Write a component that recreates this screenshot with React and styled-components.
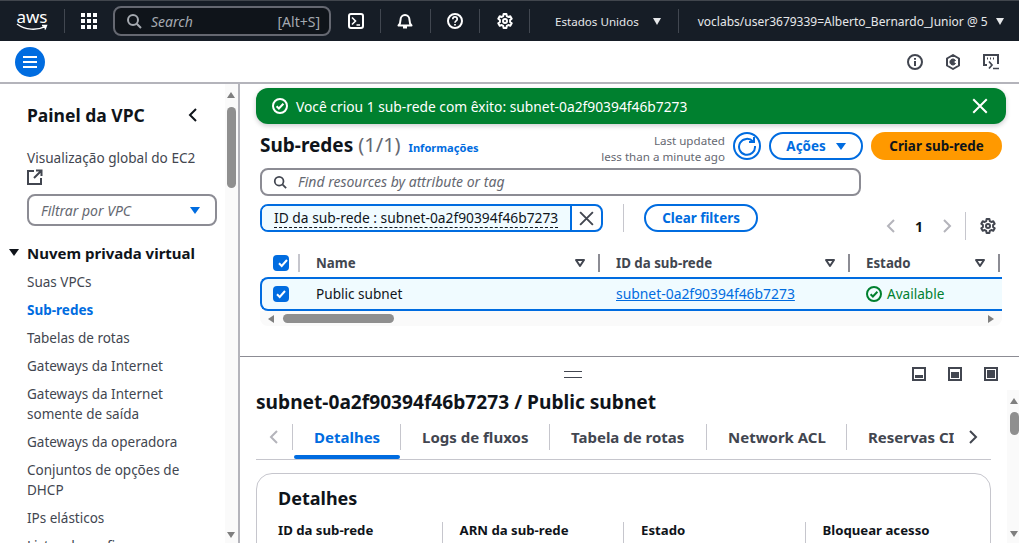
import styled, { createGlobalStyle } from "styled-components";

const GlobalStyle = createGlobalStyle`
  html, body { margin: 0; padding: 0; overflow: hidden; background: #fff; }
  body { font-family: "Noto Sans", "Open Sans", sans-serif; color: #0f141a; }
  * { box-sizing: border-box; }
`;

const Page = styled.div`
  width: 1019px;
  height: 543px;
  overflow: hidden;
  display: flex;
  flex-direction: column;
`;

/* top nav */
const TopBar = styled.header`
  height: 41px;
  flex: none;
  background: #161d26;
  border-top: 1px solid #41464d;
  color: #e6e8ea;
  display: flex;
  align-items: center;
  padding-left: 16px;
`;
const Logo = styled.div`
  width: 32px;
  height: 24px;
  position: relative;
  color: #fff;
  font-size: 17px;
  line-height: 15px;
  text-align: center;
  svg { position: absolute; left: 0; top: 14px; }
`;
const NavSep = styled.span`
  width: 1px;
  height: 24px;
  background: #414750;
  flex: none;
  margin: ${(p) => p.$m || "0"};
`;
const NavIcon = styled.span`
  width: 16px;
  height: 16px;
  flex: none;
  display: flex;
  margin: ${(p) => p.$m || "0"};
  color: #fff;
`;
const SearchBox = styled.div`
  width: 218px;
  height: 30px;
  flex: none;
  margin-left: 16px;
  border: 2px solid #656871;
  border-radius: 8px;
  background: #0f141a;
  display: flex;
  align-items: center;
  padding: 0 9px 0 11px;
  font-size: 14px;
  color: #a4a9b0;
  span:nth-child(2) { font-style: italic; margin-left: 9px; flex: 1; }
`;
const NavText = styled.span`
  font-size: ${(p) => p.$size || "11.6px"};
  white-space: nowrap;
  color: #e6e8ea;
  margin: ${(p) => p.$m || "0"};
`;
const NavCaret = styled.span`
  width: 0;
  height: 0;
  flex: none;
  border-left: 4.5px solid transparent;
  border-right: 4.5px solid transparent;
  border-top: 7px solid #e6e8ea;
  margin: ${(p) => p.$m || "0"};
`;

/* bar below nav */
const SubBar = styled.div`
  height: 43px;
  flex: none;
  border-bottom: 2px solid #b4b4bb;
  display: flex;
  align-items: center;
  padding: 1px 20px 0 15px;
`;
const MenuButton = styled.span`
  width: 30px;
  height: 30px;
  border-radius: 50%;
  background: #006ce0;
  display: flex;
  flex-direction: column;
  justify-content: center;
  gap: 3px;
  padding: 0 8px;
  margin-right: auto;
  i { display: block; height: 2px; background: #fff; }
`;
const ToolIcon = styled.span`
  width: 16px;
  height: 16px;
  margin-left: 22px;
  display: flex;
  color: #424650;
`;

const Body = styled.div`
  flex: 1;
  min-height: 0;
  display: flex;
`;

/* side nav */
const Side = styled.aside`
  width: 240px;
  flex: none;
  position: relative;
  border-right: 2px solid #b4b4bb;
  padding: 20px 0 0 27px;
  overflow: hidden;
`;
const SideHead = styled.div`
  display: flex;
  align-items: center;
  justify-content: space-between;
  width: 174px;
  height: 22px;
  font-size: 17.5px;
  font-weight: 700;
  color: #0f141a;
`;
const SideLink = styled.div`
  margin-top: 22px;
  width: 190px;
  font-size: 13.6px;
  line-height: 20px;
  color: #424650;
  svg { display: block; margin-top: 1px; }
`;
const VpcSelect = styled.div`
  width: 190px;
  height: 32px;
  margin-top: 9px;
  border: 2px solid #8c8c94;
  border-radius: 8px;
  display: flex;
  align-items: center;
  justify-content: space-between;
  padding: 0 15px 0 12px;
  font-size: 14px;
  font-style: italic;
  color: #656871;
`;
const BlueCaret = styled.span`
  width: 0;
  height: 0;
  border-left: 5.5px solid transparent;
  border-right: 5.5px solid transparent;
  border-top: 7.5px solid #006ce0;
`;
const SideSection = styled.div`
  position: relative;
  margin-top: 16px;
  font-size: 15px;
  line-height: 22px;
  font-weight: 700;
  color: #0f141a;
  &::before {
    content: "";
    position: absolute;
    left: -18px;
    top: 7px;
    border-left: 5px solid transparent;
    border-right: 5px solid transparent;
    border-top: 7px solid #0f141a;
  }
`;
const SideList = styled.ul`
  list-style: none;
  margin: 8px 0 0;
  padding: 0;
  width: 170px;
  display: flex;
  flex-direction: column;
  gap: 8px;
`;
const SideItem = styled.li`
  font-size: 13.5px;
  line-height: 20px;
  color: ${(p) => (p.$active ? "#006ce0" : "#424650")};
  font-weight: ${(p) => (p.$active ? 700 : 400)};
`;
const ScrollTrack = styled.div`
  position: absolute;
  right: 0;
  top: ${(p) => p.$top || "0"};
  bottom: 0;
  width: ${(p) => p.$w};
  background: #fafafa;
`;
const ThumbV = styled.div`
  position: absolute;
  left: ${(p) => p.$l};
  top: ${(p) => p.$t};
  width: 9px;
  height: ${(p) => p.$h};
  border-radius: 4.5px;
  background: #8f8f8f;
`;
const ArrowV = styled.div`
  position: absolute;
  left: ${(p) => p.$l};
  ${(p) => (p.$down ? `bottom: ${p.$o};` : `top: ${p.$o};`)}
  border-left: 4.5px solid transparent;
  border-right: 4.5px solid transparent;
  ${(p) => (p.$down ? "border-top: 6px solid #7f7f7f;" : "border-bottom: 6px solid #7f7f7f;")}
`;

/* main */
const Main = styled.main`
  flex: 1;
  min-width: 0;
  display: flex;
  flex-direction: column;
`;
const TopPane = styled.section`
  height: 273px;
  flex: none;
  border-bottom: 1px solid #8c8c94;
  padding: 4px 13px 0 16px;
`;
const Flash = styled.div`
  height: 36px;
  border-radius: 12px;
  background: #00802f;
  box-shadow: 0 2px 5px rgba(0, 7, 22, 0.2);
  color: #fff;
  display: flex;
  align-items: center;
  padding: 0 17px 0 16px;
  font-size: 13.8px;
  svg:first-child { margin-right: 8px; }
  span { flex: 1; }
`;
const HeaderRow = styled.div`
  display: flex;
  align-items: center;
  margin-top: 8px;
  height: 28px;
  padding: 0 4px;
`;
const PageTitle = styled.h1`
  margin: -2px 0 0;
  font-size: 19px;
  font-weight: 700;
  line-height: 26px;
  white-space: nowrap;
  span { font-size: 20px; font-weight: 400; color: #656871; margin-left: 5px; }
`;
const InfoLink = styled.a`
  font-size: 11.1px;
  font-weight: 700;
  color: #006ce0;
  margin-left: 8px;
  margin-top: 3px;
`;
const Updated = styled.div`
  margin-left: auto;
  text-align: right;
  font-size: 11.6px;
  line-height: 16px;
  color: #656871;
  margin-top: 5px;
`;
const RoundIcon = styled.span`
  width: 28px;
  height: 28px;
  border: 2px solid #006ce0;
  border-radius: 50%;
  display: flex;
  align-items: center;
  justify-content: center;
  margin: 0 8px;
  color: #006ce0;
`;
const OutlineButton = styled.span`
  height: 28px;
  width: ${(p) => p.$w};
  border: 2px solid #006ce0;
  border-radius: 14px;
  color: #006ce0;
  font-size: 13.4px;
  font-weight: 700;
  display: flex;
  align-items: center;
  justify-content: center;
  gap: 10px;
  flex: none;
`;
const PrimaryButton = styled.span`
  height: 28px;
  width: 131px;
  margin-left: 8px;
  border-radius: 14px;
  background: #ff9900;
  color: #0f141a;
  font-size: 13.4px;
  font-weight: 700;
  display: flex;
  align-items: center;
  justify-content: center;
  flex: none;
`;
const FindInput = styled.div`
  margin: 8px 0 0 4px;
  width: 601px;
  height: 28px;
  border: 2px solid #8c8c94;
  border-radius: 8px;
  display: flex;
  align-items: center;
  gap: 11px;
  padding: 0 0 1px 11px;
  font-size: 14px;
  font-style: italic;
  color: #656871;
  svg { color: #424650; }
`;
const FilterRow = styled.div`
  display: flex;
  align-items: flex-start;
  margin: 8px 0 0 4px;
  height: 36px;
`;
const Chip = styled.div`
  height: 28px;
  width: 343px;
  flex: none;
  border: 2px solid #006ce0;
  border-radius: 8px;
  display: flex;
  overflow: hidden;
  font-size: 13.8px;
  color: #0f141a;
`;
const ChipLabel = styled.div`
  flex: 1;
  background: #f0fbff;
  border-right: 2px solid #006ce0;
  padding-left: 12px;
  line-height: 23px;
  white-space: nowrap;
  span { border-bottom: 1px dashed #0f141a; }
`;
const ChipClose = styled.div`
  width: 29px;
  display: flex;
  align-items: center;
  justify-content: center;
  color: #424650;
`;
const FilterSep = styled.span`
  width: 1px;
  height: 28px;
  background: #c6c6cd;
  margin: 0 20px;
  flex: none;
`;
const Pager = styled.div`
  margin-left: auto;
  margin-top: 8px;
  display: flex;
  align-items: center;
  height: 28px;
  color: #b4b4bb;
  padding-right: 10px;
  b { width: 40px; text-align: center; font-size: 14px; color: #0f141a; }
  i { width: 1px; height: 28px; background: #c6c6cd; margin: 0 14px 0 10px; }
  svg:last-child { color: #424650; }
`;
const TableWrap = styled.div`
  margin: 9px 0 0 4px;
  width: 742px;
  overflow: hidden;
  position: relative;
`;
const TableGrid = styled.div`
  display: grid;
  grid-template-columns: 40px 300px 250px 150px 2px;
`;
const HeadCell = styled.div`
  height: 28px;
  display: flex;
  align-items: center;
  font-size: 13.3px;
  font-weight: 700;
  color: #424650;
  padding-left: ${(p) => (p.$check ? "13px" : "16px")};
  padding-right: 14px;
  position: relative;
  white-space: nowrap;
  &::after {
    content: "";
    position: absolute;
    right: 0;
    top: 5px;
    height: 18px;
    width: 2px;
    background: ${(p) => (p.$check ? "#c6c6cd" : "#8c8c94")};
  }
  svg:last-child { margin-left: auto; }
`;
const Check = styled.span`
  width: 16px;
  height: 16px;
  border-radius: 4px;
  background: #006ce0;
  display: flex;
  align-items: center;
  justify-content: center;
  flex: none;
`;
const Row = styled.div`
  grid-column: 1 / -1;
  height: 34px;
  padding-bottom: 1px;
  display: grid;
  grid-template-columns: inherit;
  align-items: center;
  background: #f0fbff;
  border: 2px solid #006ce0;
  border-right: 0;
  border-radius: 8px 0 0 8px;
  font-size: 13.6px;
`;
const RowCheck = styled.div`
  padding-left: 11px;
`;
const RowCell = styled.div`
  padding-left: 14px;
  white-space: nowrap;
  display: flex;
  align-items: center;
  gap: 5px;
  color: ${(p) => p.$color || "#0f141a"};
  a { color: #006ce0; text-decoration: underline; font-size: 13.9px; }
`;
const HScroll = styled.div`
  height: 15px;
  background: #fafafa;
  display: flex;
  align-items: center;
  padding: 0 8px;
  border-radius: 0 0 8px 8px;
`;
const HThumb = styled.div`
  width: 111px;
  height: 9px;
  border-radius: 5px;
  background: #8f8f8f;
  margin-left: 9px;
  margin-right: auto;
`;
const ArrowH = styled.span`
  width: 0;
  height: 0;
  border-top: 4.5px solid transparent;
  border-bottom: 4.5px solid transparent;
  ${(p) => (p.$right ? "border-left: 6px solid #7f7f7f;" : "border-right: 6px solid #7f7f7f;")}
`;

/* bottom split */
const BottomPane = styled.section`
  flex: 1;
  min-height: 0;
  position: relative;
  overflow: hidden;
  padding: 0 28px 0 16px;
`;
const Handle = styled.div`
  height: 33px;
  position: relative;
  &::before {
    content: "";
    position: absolute;
    left: 308px;
    top: 14px;
    width: 18px;
    height: 5px;
    border-top: 1px solid #424650;
    border-bottom: 1px solid #424650;
  }
`;
const SplitIcons = styled.div`
  position: absolute;
  right: 21px;
  top: 10px;
  display: flex;
  gap: 22px;
  color: #424650;
`;
const DetailTitle = styled.h2`
  margin: 0;
  font-size: 19.15px;
  line-height: 24px;
  font-weight: 700;
  white-space: nowrap;
`;
const Tabs = styled.div`
  margin-top: 10px;
  height: 36px;
  border-bottom: 1px solid #c6c6cd;
  display: flex;
  align-items: flex-start;
  position: relative;
`;
const TabArrow = styled.span`
  width: ${(p) => p.$w};
  height: 26px;
  display: flex;
  align-items: center;
  justify-content: center;
  color: ${(p) => p.$c};
  flex: none;
`;
const Tab = styled.div`
  height: 35px;
  flex: none;
  width: ${(p) => p.$w};
  padding: 1px 0 0 22px;
  font-size: 15px;
  line-height: 24px;
  font-weight: 700;
  overflow: hidden;
  white-space: nowrap;
  color: ${(p) => (p.$active ? "#006ce0" : "#424650")};
  position: relative;
  &::before {
    content: "";
    position: absolute;
    left: 0;
    top: 0;
    height: 26px;
    width: 1px;
    background: #c6c6cd;
  }
  ${(p) =>
    p.$active &&
    `&::after {
    content: "";
    position: absolute;
    left: 2px;
    right: 0;
    bottom: 0;
    height: 4px;
    border-radius: 2px;
    background: #006ce0;
  }`}
`;
const Card = styled.div`
  margin-top: 13px;
  height: 120px;
  border: 1px solid #c6c6cd;
  border-radius: 16px;
  padding: 12px 21px 0;
`;
const CardTitle = styled.h3`
  margin: 0;
  font-size: 18px;
  line-height: 24px;
  font-weight: 700;
`;
const DetailGrid = styled.div`
  margin-top: 10px;
  display: grid;
  grid-template-columns: repeat(4, 181.5px);
`;
const DetailCol = styled.div`
  height: 60px;
  font-size: 13.2px;
  line-height: 20px;
  font-weight: 700;
  color: #0f141a;
  position: relative;
  white-space: nowrap;
  ${(p) =>
    !p.$last &&
    `&::after {
    content: "";
    position: absolute;
    right: 17px;
    top: 2px;
    bottom: 0;
    width: 1px;
    background: #c6c6cd;
  }`}
`;
const Marker = styled.span`
  display: block;
  margin: 5px 0 0 3px;
  width: 13px;
  height: 13px;
  border-radius: ${(p) => (p.$round ? "50%" : "1px")};
  background: ${(p) => p.$c};
`;

const Svg = ({ size = 16, children, ...rest }) => (
  <svg width={size} height={size} viewBox="0 0 16 16" fill="none" stroke="currentColor" strokeWidth="2" {...rest}>
    {children}
  </svg>
);
const SearchIcon = ({ size = 16 }) => (
  <Svg size={size}>
    <circle cx="7" cy="7" r="5" />
    <path d="M10.7 10.7L15 15" />
  </Svg>
);
const CloseIcon = ({ size = 16 }) => (
  <Svg size={size} strokeWidth="1.8">
    <path d="M2 2l12 12M14 2L2 14" />
  </Svg>
);
const GearIcon = ({ size = 16 }) => (
  <Svg size={size}>
    <circle cx="8" cy="8" r="2" />
    <path d="M6.6 1h2.8l.4 2.1 1.5.9 2-.7 1.4 2.4-1.6 1.4v1.8l1.6 1.4-1.4 2.4-2-.7-1.5.9-.4 2.1H6.6l-.4-2.1-1.5-.9-2 .7-1.4-2.4 1.6-1.4V7.1L1.3 5.7l1.4-2.4 2 .7 1.5-.9z" strokeLinejoin="round" />
  </Svg>
);
const CheckCircle = ({ size = 16 }) => (
  <Svg size={size}>
    <circle cx="8" cy="8" r="7" />
    <path d="M4.6 8.2l2.3 2.3 4.5-4.7" />
  </Svg>
);
const ChevL = () => (
  <Svg>
    <path d="M11 2L5 8l6 6" />
  </Svg>
);
const ChevR = () => (
  <Svg>
    <path d="M5 2l6 6-6 6" />
  </Svg>
);
const Tick = () => (
  <svg width="12" height="12" viewBox="0 0 12 12" fill="none" stroke="#fff" strokeWidth="2">
    <path d="M2 6.3l2.7 2.7L10 3" />
  </svg>
);
const SortCaret = () => (
  <svg width="12" height="10" viewBox="0 0 12 10" fill="none" stroke="#424650" strokeWidth="2" strokeLinejoin="round">
    <path d="M2 2h8L6 8z" />
  </svg>
);
const PanelIcon = ({ y, h }) => (
  <svg width="14" height="14" viewBox="0 0 14 14">
    <rect x="1" y="1" width="12" height="12" fill="none" stroke="currentColor" strokeWidth="2" />
    <rect x="3" y={y} width="8" height={h} fill="currentColor" />
  </svg>
);

const sideLinks = [
  "Suas VPCs",
  "Sub-redes",
  "Tabelas de rotas",
  "Gateways da Internet",
  "Gateways da Internet somente de saída",
  "Gateways da operadora",
  "Conjuntos de opções de DHCP",
  "IPs elásticos",
  "Listas de prefixos",
];

const tabs = [
  ["Detalhes", "108px"],
  ["Logs de fluxos", "149px"],
  ["Tabela de rotas", "157px"],
  ["Network ACL", "140px"],
  ["Reservas CIDR", "108px"],
];

const details = ["ID da sub-rede", "ARN da sub-rede", "Estado", "Bloquear acesso"];

const App = () => (
  <Page>
    <GlobalStyle />
    <TopBar>
      <Logo>
        aws
        <svg width="32" height="9" viewBox="0 0 32 9" fill="none" stroke="#fff" strokeWidth="1.4">
          <path d="M1 1c8 6 20 7 29 2M26 2.500l4.500 0-1.500 4" />
        </svg>
      </Logo>
      <NavSep $m="0 16px 0 16px" />
      <NavIcon>
        <svg width="16" height="16" viewBox="0 0 16 16" fill="currentColor">
          {[0, 6, 12].map((y) =>
            [0, 6, 12].map((x) => <rect key={`${x}-${y}`} x={x} y={y} width="4" height="4" />)
          )}
        </svg>
      </NavIcon>
      <SearchBox>
        <SearchIcon />
        <span>Search</span>
        <span>[Alt+S]</span>
      </SearchBox>
      <NavIcon $m="0 16px 0 17px">
        <Svg>
          <rect x="1" y="1" width="14" height="14" rx="2" />
          <path d="M4 4.500L7.500 8 4 11.500M8.500 12H12" strokeWidth="1.6" />
        </Svg>
      </NavIcon>
      <NavSep />
      <NavIcon $m="0 17px 0 16px">
        <Svg>
          <path d="M1.500 12.500h13c-1.500-1.500-2-2.500-2-5.500C12.500 4 10.500 2 8 2S3.500 4 3.500 7c0 3-.5 4-2 5.500zM6 14.500h4" strokeLinejoin="round" />
        </Svg>
      </NavIcon>
      <NavSep />
      <NavIcon $m="0 16px 0 16px">
        <Svg>
          <circle cx="8" cy="8" r="7" />
          <path d="M5.800 6.200c0-3 4.400-3 4.400 0C10.200 8 8 7.800 8 9.800M8 11v1.500" strokeWidth="1.7" />
        </Svg>
      </NavIcon>
      <NavSep />
      <NavIcon $m="0 16px 0 17px">
        <GearIcon />
      </NavIcon>
      <NavSep />
      <NavText $m="0 14px 0 25px">Estados Unidos</NavText>
      <NavCaret />
      <NavSep $m="0 19px 0 17px" />
      <NavText $size="12px">voclabs/user3679339=Alberto_Bernardo_Junior @ 5</NavText>
      <NavCaret $m="0 0 0 8px" />
    </TopBar>
    <SubBar>
      <MenuButton>
        <i />
        <i />
        <i />
      </MenuButton>
      <ToolIcon>
        <Svg>
          <circle cx="8" cy="8" r="7" />
          <path d="M8 7v5M8 4v1.800" />
        </Svg>
      </ToolIcon>
      <ToolIcon>
        <svg width="16" height="16" viewBox="0 0 16 16" fill="none" stroke="currentColor" strokeWidth="2">
          <path d="M8 1l6 3.500v7L8 15l-6-3.500v-7z" strokeLinejoin="round" />
          <path d="M10.500 6.500A3 3 0 1 0 10.500 9.500L8 8z" fill="currentColor" strokeWidth="1" />
        </svg>
      </ToolIcon>
      <ToolIcon>
        <svg width="16" height="16" viewBox="0 0 16 16" fill="none" stroke="currentColor" strokeWidth="2">
          <path d="M4 11H1V1h14v9" />
          <path d="M4 4.500h1M7 4.500h1M10 4.500h1" />
          <path d="M6 7.500L9 11l-3 3.500M10 14.500h6" strokeWidth="1.7" />
        </svg>
      </ToolIcon>
    </SubBar>
    <Body>
      <Side>
        <SideHead>
          Painel da VPC
          <Svg>
            <path d="M11 2L5 8l6 6" />
          </Svg>
        </SideHead>
        <SideLink>
          Visualização global do EC2
          <Svg>
            <path d="M7 2H1v13h13V9M9 1.500h5.500V7M14 2L7 9" />
          </Svg>
        </SideLink>
        <VpcSelect>
          Filtrar por VPC
          <BlueCaret />
        </VpcSelect>
        <SideSection>Nuvem privada virtual</SideSection>
        <SideList>
          {sideLinks.map((l) => (
            <SideItem key={l} $active={l === "Sub-redes"}>
              {l}
            </SideItem>
          ))}
        </SideList>
        <ScrollTrack $w="13px">
          <ArrowV $l="2px" $o="8px" />
          <ThumbV $l="2px" $t="23px" $h="81px" />
          <ArrowV $l="2px" $o="5px" $down />
        </ScrollTrack>
      </Side>
      <Main>
        <TopPane>
          <Flash>
            <CheckCircle />
            <span>Você criou 1 sub-rede com êxito: subnet-0a2f90394f46b7273</span>
            <CloseIcon size={18} />
          </Flash>
          <HeaderRow>
            <PageTitle>
              Sub-redes<span>(1/1)</span>
            </PageTitle>
            <InfoLink>Informações</InfoLink>
            <Updated>
              Last updated
              <br />
              less than a minute ago
            </Updated>
            <RoundIcon>
              <svg width="20" height="20" viewBox="0 0 20 20" fill="none" stroke="currentColor" strokeWidth="2">
                <path d="M16 5.500A8 8 0 1 0 18 10" />
                <path d="M17 1v5h-5" />
              </svg>
            </RoundIcon>
            <OutlineButton $w="94px">
              Ações
              <BlueCaret />
            </OutlineButton>
            <PrimaryButton>Criar sub-rede</PrimaryButton>
          </HeaderRow>
          <FindInput>
            <SearchIcon size={14} />
            Find resources by attribute or tag
          </FindInput>
          <FilterRow>
            <Chip>
              <ChipLabel>
                <span>ID da sub-rede : subnet-0a2f90394f46b7273</span>
              </ChipLabel>
              <ChipClose>
                <CloseIcon size={17} />
              </ChipClose>
            </Chip>
            <FilterSep />
            <OutlineButton $w="114px">Clear filters</OutlineButton>
            <Pager>
              <ChevL />
              <b>1</b>
              <ChevR />
              <i />
              <GearIcon />
            </Pager>
          </FilterRow>
          <TableWrap>
            <TableGrid>
              <HeadCell $check>
                <Check>
                  <Tick />
                </Check>
              </HeadCell>
              <HeadCell>
                Name
                <SortCaret />
              </HeadCell>
              <HeadCell>
                ID da sub-rede
                <SortCaret />
              </HeadCell>
              <HeadCell>
                Estado
                <SortCaret />
              </HeadCell>
              <HeadCell />
              <Row>
                <RowCheck>
                  <Check>
                    <Tick />
                  </Check>
                </RowCheck>
                <RowCell>Public subnet</RowCell>
                <RowCell>
                  <a>subnet-0a2f90394f46b7273</a>
                </RowCell>
                <RowCell $color="#00802f">
                  <CheckCircle size={16} />
                  Available
                </RowCell>
              </Row>
            </TableGrid>
            <HScroll>
              <ArrowH />
              <HThumb />
              <ArrowH $right />
            </HScroll>
          </TableWrap>
        </TopPane>
        <BottomPane>
          <Handle />
          <SplitIcons>
            <PanelIcon y={8} h={3} />
            <PanelIcon y={5} h={6} />
            <PanelIcon y={3} h={8} />
          </SplitIcons>
          <DetailTitle>subnet-0a2f90394f46b7273 / Public subnet</DetailTitle>
          <Tabs>
            <TabArrow $w="36px" $c="#b4b4bb">
              <ChevL />
            </TabArrow>
            {tabs.map(([t, w], i) => (
              <Tab key={t} $w={w} $active={i === 0}>
                {t}
              </Tab>
            ))}
            <TabArrow $w="38px" $c="#424650">
              <ChevR />
            </TabArrow>
          </Tabs>
          <Card>
            <CardTitle>Detalhes</CardTitle>
            <DetailGrid>
              {details.map((d, i) => (
                <DetailCol key={d} $last={i === 3}>
                  {d}
                  {i < 3 && <Marker $c={i === 2 ? "#00802f" : "#006ce0"} $round={i === 2} />}
                </DetailCol>
              ))}
            </DetailGrid>
          </Card>
          <ScrollTrack $top="33px" $w="12px">
            <ArrowV $l="3px" $o="8px" />
            <ThumbV $l="3px" $t="22px" $h="23px" />
            <ArrowV $l="3px" $o="6px" $down />
          </ScrollTrack>
        </BottomPane>
      </Main>
    </Body>
  </Page>
);

export default App;
